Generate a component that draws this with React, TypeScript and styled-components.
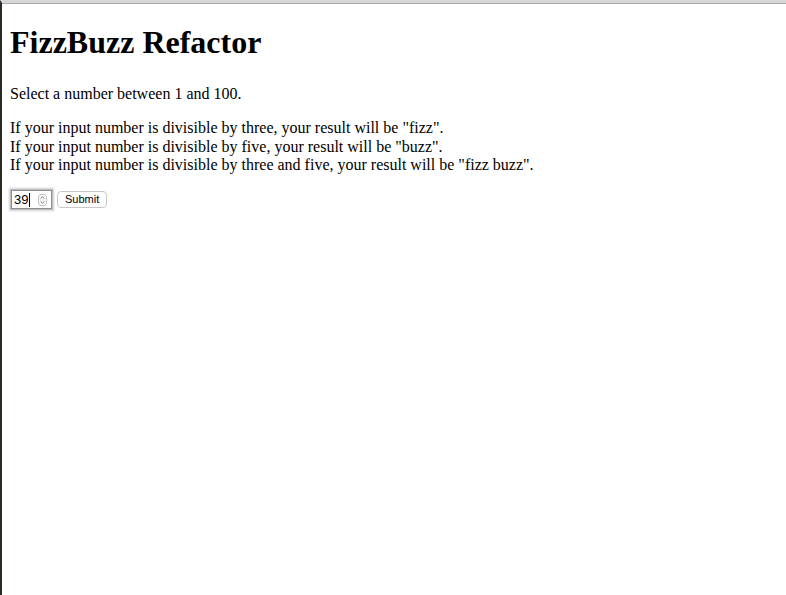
import React, { useState } from "react";
import styled, { createGlobalStyle } from "styled-components";

const GlobalStyle = createGlobalStyle`
	html, body {
		margin: 0;
		padding: 0;
		background: #ffffff;
	}
	body {
		font-family: "Liberation Serif", "Times New Roman", serif;
		color: #000000;
	}
`;

export default function App() {
	const [value, setValue] = useState("39");

	return (
		<>
			<GlobalStyle />
			<Frame>
				<Page>
					<Title>FizzBuzz Refactor</Title>
					<Text>Select a number between 1 and 100.</Text>
					<Text>
						If your input number is divisible by three, your result will be "fizz".<br />
						If your input number is divisible by five, your result will be "buzz".<br />
						If your input number is divisible by three and five, your result will be "fizz buzz".
					</Text>
					<Form onSubmit={(e) => e.preventDefault()}>
						<NumberField>
							<NumberInput
								value={value}
								onChange={(e) => setValue(e.target.value)}
							/>
							<Caret />
							<Spinner width="9" height="12" viewBox="0 0 9 12">
								<rect x="0.5" y="0.5" width="8" height="11" rx="2.5" fill="#f7f7f7" stroke="#c4c4c4" />
								<path d="M2.6 4.6 L4.5 2.8 L6.4 4.6" fill="none" stroke="#6a6a6a" strokeWidth="0.9" />
								<path d="M2.6 7.4 L4.5 9.2 L6.4 7.4" fill="none" stroke="#6a6a6a" strokeWidth="0.9" />
							</Spinner>
						</NumberField>
						<SubmitButton type="submit">Submit</SubmitButton>
					</Form>
				</Page>
			</Frame>
		</>
	);
}

const Frame = styled.div`
	min-height: 100vh;
	box-sizing: border-box;
	border-top: 3px solid #d6d6d6;
	border-left: 2px solid #2a2a22;
	box-shadow: inset 0 1px 0 #a9a9a9;
	background: #ffffff;
	display: flow-root;
`;

const Page = styled.div`
	padding: 0 8px;
`;

const Title = styled.h1`
	font-size: 32px;
	font-weight: bold;
	margin: 21.4px 0 23.4px;
`;

const Text = styled.p`
	font-size: 16px;
	margin: 16px 0;
	line-height: 18.4px;
`;

const Form = styled.form`
	display: flex;
	align-items: center;
	gap: 5px;
	margin-top: 15px;
	padding-left: 1px;
`;

const NumberField = styled.div`
	display: flex;
	align-items: center;
	width: 41px;
	height: 19px;
	box-sizing: border-box;
	padding: 0 4px 0 2px;
	border: 1px solid #8e8e8e;
	box-shadow: 0 0 0 1px #bdbdbd, 0 0 2px 2px #d2d2d2;
	background: #ffffff;
`;

const NumberInput = styled.input`
	width: 15px;
	border: none;
	outline: none;
	padding: 0;
	margin: 0;
	font-family: "Liberation Sans", Arial, sans-serif;
	font-size: 13px;
	color: #000000;
	background: transparent;
	caret-color: transparent;
`;

const Caret = styled.span`
	width: 1px;
	height: 14px;
	background: #000000;
`;

const Spinner = styled.svg`
	margin-left: auto;
	flex: none;
`;

const SubmitButton = styled.button`
	height: 17px;
	padding: 0 7px;
	border: 1px solid #c8c8c8;
	border-radius: 4px;
	background: #ffffff;
	font-family: "Liberation Sans", Arial, sans-serif;
	font-size: 11px;
	line-height: 15px;
	color: #000000;
	cursor: pointer;
`;
